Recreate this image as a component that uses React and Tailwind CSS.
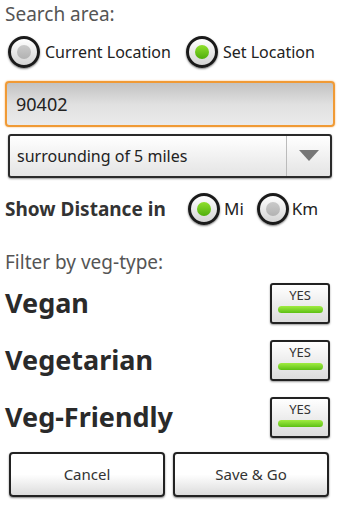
import React from "react";

function Radio({ on }) {
  return (
    <span className="flex h-[32px] w-[32px] items-center justify-center rounded-full border-[3px] border-[#1a1a1a] bg-gradient-to-b from-white to-[#d4d4d4] shadow-[0_1px_2px_rgba(0,0,0,0.5)]">
      <span
        className={
          on
            ? "h-[14px] w-[14px] rounded-full bg-gradient-to-b from-[#8fe02c] to-[#4fae0a]"
            : "h-[14px] w-[14px] rounded-full bg-gradient-to-b from-[#cacaca] to-[#b2b2b2]"
        }
      />
    </span>
  );
}

function Toggle() {
  return (
    <div className="flex h-[41px] w-[60px] flex-col items-center rounded-[3px] border-2 border-[#222] bg-gradient-to-b from-white to-[#dcdcdc] pt-[2px] shadow-[0_1px_2px_rgba(0,0,0,0.4)]">
      <span className="text-[13px] leading-[16px] text-[#333]">YES</span>
      <span className="mt-[3px] h-[7px] w-[45px] rounded-full bg-gradient-to-b from-[#a0ec40] to-[#5cc010]" />
    </div>
  );
}

function VegRow({ label }) {
  return (
    <div className="flex h-[57px] items-center justify-between pl-[5px] pr-[10px]">
      <span className="text-[27px] font-bold text-[#2a2a2a]">{label}</span>
      <Toggle />
    </div>
  );
}

export default function App() {
  return (
    <div className="h-[510px] w-[340px] bg-white text-[#333]" style={{ fontFamily: '"Noto Sans", "Open Sans", sans-serif' }}>
      <div className="pl-[5px] pt-[1px] text-[19px] leading-[26px] text-[#555]">Search area:</div>

      <div className="mt-[9px] flex h-[32px] items-center pl-[8px]">
        <Radio on={false} />
        <span className="ml-[5px] text-[16px] text-[#222]">Current Location</span>
        <span className="ml-[15px]"><Radio on /></span>
        <span className="ml-[5px] text-[16px] text-[#222]">Set Location</span>
      </div>

      <div className="mx-[5px] mt-[13px] flex h-[46px] items-center rounded-[4px] border-2 border-[#f09a35] bg-gradient-to-b from-[#c2c2c2] via-[#e0e0e0] to-[#ebebeb] pl-[9px] shadow-[0_0_2px_#f5b060]">
        <span className="text-[18px] text-[#222]">90402</span>
      </div>

      <div className="mx-[8px] mt-[7px] flex h-[44px] items-stretch rounded-[3px] border-2 border-[#2a2a2a] bg-gradient-to-b from-white to-[#e4e4e4] shadow-[0_1px_2px_rgba(0,0,0,0.4)]">
        <span className="flex flex-1 items-center pl-[7px] text-[16px] text-[#222]">surrounding of 5 miles</span>
        <span className="flex w-[44px] items-center justify-center border-l border-[#bbb]">
          <svg width="20" height="12" viewBox="0 0 20 12">
            <polygon points="0,0 20,0 10,11" fill="#777" />
          </svg>
        </span>
      </div>

      <div className="mt-[14px] flex h-[34px] items-center pl-[5px]">
        <span className="w-[183px] text-[19px] font-bold text-[#333]">Show Distance in</span>
        <Radio on />
        <span className="ml-[4px] text-[17px] text-[#222]">Mi</span>
        <span className="ml-[13px]"><Radio on={false} /></span>
        <span className="ml-[3px] text-[17px] text-[#222]">Km</span>
      </div>

      <div className="mt-[23px] pl-[5px] text-[19px] leading-[26px] text-[#555]">Filter by veg-type:</div>

      <div className="mt-[0px]">
        <VegRow label="Vegan" />
        <VegRow label="Vegetarian" />
        <VegRow label="Veg-Friendly" />
      </div>

      <div className="mt-[6px] flex gap-[8px] pl-[9px] pr-[11px]">
        {["Cancel", "Save & Go"].map((t) => (
          <button
            key={t}
            className="h-[45px] flex-1 rounded-[4px] border-2 border-[#222] bg-gradient-to-b from-white via-white to-[#dcdcdc] text-[15px] text-[#333] shadow-[0_1px_2px_rgba(0,0,0,0.5)]"
          >
            {t}
          </button>
        ))}
      </div>
    </div>
  );
}
